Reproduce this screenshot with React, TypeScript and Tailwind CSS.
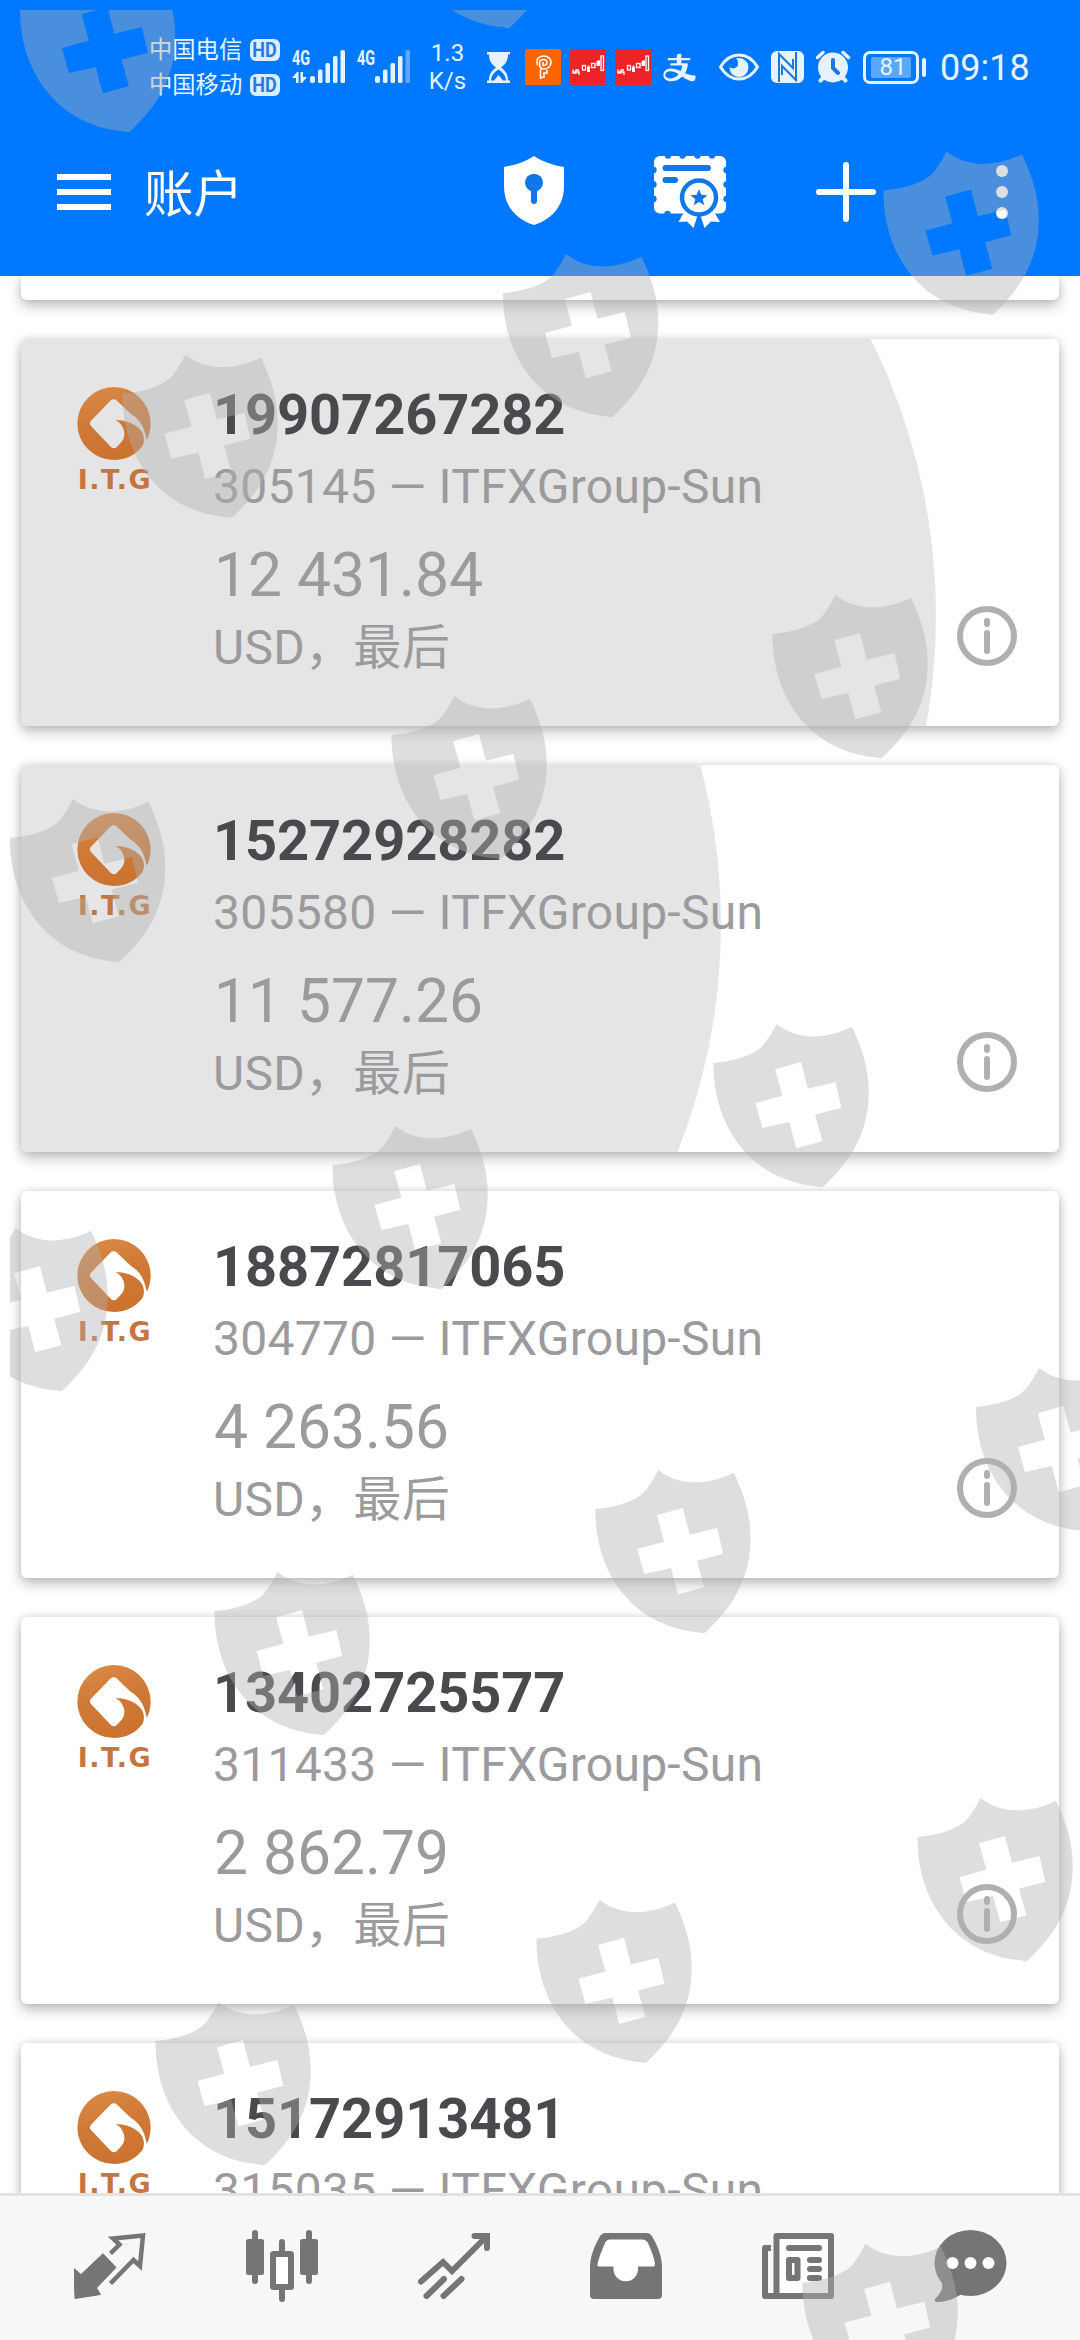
import type { ReactNode } from "react";
import { AiOutlineAlipay } from "react-icons/ai";

type Account = {
  name: string;
  login: string;
  balance?: string;
  // Centre of the ripple circle inside the card, if it is still expanding
  ripple?: { x: number; y: number };
};

const accounts: Account[] = [
  { name: "19907267282", login: "305145", balance: "12 431.84", ripple: { x: 294.5, y: 277 } },
  { name: "15272928282", login: "305580", balance: "11 577.26", ripple: { x: 79.5, y: 159 } },
  { name: "18872817065", login: "304770", balance: "4 263.56" },
  { name: "13402725577", login: "311433", balance: "2 862.79" },
  { name: "15172913481", login: "315035" },
];

const RIPPLE_RADIUS = 620;

const shields = [
  [19.5, -31],
  [399.5, -135],
  [883, 151.5],
  [502.5, 254],
  [122, 354.7],
  [772, 595],
  [391, 696],
  [9.5, 799],
  [713, 1024],
  [332, 1126],
  [-48, 1228],
  [975.5, 1368],
  [594.8, 1470],
  [214, 1572],
  [917, 1798],
  [536, 1899.7],
  [155, 2002],
  [802, 2243.7],
];

function ShieldOverlay() {
  return (
    <svg
      className="pointer-events-none absolute inset-0 z-50"
      width="1080"
      height="2340"
      viewBox="0 0 1080 2340"
    >
      <defs>
        <clipPath id="overlay-area">
          <rect x="10" y="10" width="1070" height="2330" />
        </clipPath>
        <path
          id="shield"
          fillRule="evenodd"
          d="M0.5 39C22 37 43 31 52 19Q58 11 63.5 0C82 15 110 17 139 2.7C151 28 157 50 155.5 75C154 110 137 138 111 162Q109 164 105 162.500C40 157 0 105 0.500 39ZM62.200 45.300L88 38L94.900 64.700L122.400 58L128.300 83.700L102.100 90.700L109.300 117.300L83.200 124.300L76.300 98L49.400 104L42.500 79L69.400 71.700Z"
        />
      </defs>
      <g clipPath="url(#overlay-area)" fill="#b0b0b0" fillOpacity="0.42">
        {shields.map(([x, y]) => (
          <use key={`${x}-${y}`} href="#shield" x={x} y={y} />
        ))}
      </g>
    </svg>
  );
}

function Carrier({ name }: { name: string }) {
  return (
    <div className="flex h-[35px] items-center justify-between">
      <span className="pt-[2px] text-[23.300px] leading-[33px] whitespace-nowrap">{name}</span>
      <span className="flex h-[22px] w-[30px] items-center justify-center rounded-[6px] bg-[#d9eeff] text-[20px] leading-none font-bold text-[#2a7be0]">
        <span className="scale-x-90">HD</span>
      </span>
    </div>
  );
}

function Signal({ dimLast, arrows }: { dimLast?: boolean; arrows?: boolean }) {
  return (
    <div className="relative h-[36px] w-[53px]">
      <span className="absolute -top-px left-0 origin-left scale-x-[0.72] text-[20px] leading-[20px] font-bold">4G</span>
      <svg className="absolute inset-0" width="53" height="36" viewBox="0 0 53 36" fill="currentColor">
        {arrows && (
          <path d="M0 29L5 23H6.500V34H4V29ZM8.500 23H11V28H15L10 34H8.500Z" />
        )}
        <rect x="18" y="27" width="5" height="7" rx="2" />
        <rect x="26" y="20.500" width="4.500" height="13.500" rx="1.500" />
        <rect x="33.500" y="14" width="4.500" height="20" rx="1.500" />
        <rect x="41" y="7" width="4.500" height="27" rx="1.500" />
        <rect x="48.500" y="1" width="4.500" height="33" rx="1.500" opacity={dimLast ? 0.4 : 1} />
      </svg>
    </div>
  );
}

function StockBadge() {
  return (
    <svg className="ml-[9px]" width="36" height="36" viewBox="0 0 36 36">
      <rect width="36" height="36" rx="2" fill="#ec2427" />
      <g fill="none" stroke="#fff" strokeWidth="1.300">
        <path d="M3 23H9V26M3 20.500V24H6V21H9" />
        <rect x="12.500" y="16.500" width="3" height="4.500" />
        <rect x="21.500" y="14.500" width="3.500" height="4" />
        <rect x="31" y="7" width="2.500" height="14.500" />
      </g>
      <path d="M17 18.500L18.500 16L20 18.500V23H17ZM26.500 12L30 11V17H26.500Z" fill="#fff" />
    </svg>
  );
}

function StatusBar() {
  return (
    <div className="flex h-[134px] items-center pl-[149px] text-[#e6f3ff]">
      <div className="w-[131px]">
        <Carrier name="中国电信" />
        <Carrier name="中国移动" />
      </div>
      <div className="ml-[12px]">
        <Signal arrows />
      </div>
      <div className="ml-[12px]">
        <Signal dimLast />
      </div>
      <div className="ml-[17px] w-[41px] text-center text-[24px] leading-[28px]">
        <div>1.3</div>
        <div>K/s</div>
      </div>
      <svg className="ml-[18px]" width="25" height="31" viewBox="0 0 25 31">
        <path d="M1 0H24V2.500H22C22 9 19.500 12 15 15.500C19.500 19 22 22 22 28.500H24V31H1V28.500H3C3 22 5.500 19 10 15.500C5.500 12 3 9 3 2.500H1Z" fill="currentColor" />
        <path d="M5 28.500C5.500 23 8.500 20 12.500 17.500C16.500 20 19.500 23 20 28.500H17L12.500 23L8 28.500Z" fill="#0078ff" />
      </svg>
      <svg className="ml-[14px]" width="36" height="36" viewBox="0 0 36 36" fill="none" stroke="#fff" strokeWidth="1.600">
        <rect width="36" height="36" rx="2" fill="#fd6500" stroke="none" />
        <path d="M12.500 16.500C10.500 10 14 7 18.500 7C23 7 26 10 26 13.500C26 17.500 22.500 20 18.500 20C15.500 20 14.500 18 14.500 14C14.500 11.500 16 10.500 18.500 10.500C21 10.500 22 12 22 13.500C22 15.500 20.500 16.500 18 16.500V13M15.500 20V29L19 28V24H22V21" />
      </svg>
      <StockBadge />
      <StockBadge />
      <AiOutlineAlipay className="ml-[10px] size-[37px]" />
      <svg className="ml-[20px]" width="42" height="28" viewBox="0 0 42 28">
        <path d="M2.500 14C12 -2 30 -2 39.500 14C30 30 12 30 2.500 14Z" fill="none" stroke="currentColor" strokeWidth="3" />
        <path d="M21 5A9.500 9.500 0 1 1 11.500 14C15 17 20.500 15 20 10C20 8 19 6 18 5.500Z" fill="currentColor" />
      </svg>
      <svg className="ml-[11px]" width="33" height="32" viewBox="0 0 33 32">
        <rect width="33" height="32" rx="6" fill="currentColor" />
        <path d="M8 31V3L22 17V8M25 1V29L11 15V24" fill="none" stroke="#1b78e0" strokeWidth="2" />
      </svg>
      <svg className="ml-[11px]" width="36" height="34" viewBox="0 0 36 34" fill="none" stroke="currentColor" strokeLinecap="round">
        <circle cx="18" cy="17.500" r="15" fill="currentColor" stroke="none" />
        <path d="M2.500 7.500L8 2.500M33.500 7.500L28 2.500" strokeWidth="3.500" />
        <path d="M5.500 30.500L8 28M30.500 30.500L28 28" strokeWidth="4" />
        <path d="M18 10V18L23 23" stroke="#1b78e0" strokeWidth="4" />
      </svg>
      <div className="ml-[12px] flex h-[33px] w-[56px] items-center justify-center rounded-[7px] border-[3px] border-[#e6f3ff]">
        <div className="flex h-[21px] w-[40px] items-center justify-center rounded-[2px] bg-[#5aa7ff] pl-1 text-[24px] leading-none">81</div>
      </div>
      <div className="ml-[3px] h-[19px] w-[4px] rounded-full bg-[#e6f3ff]" />
      <div className="ml-[14px] pt-[2px] text-[36px] leading-[40px]">09:18</div>
    </div>
  );
}

function ProtectIcon() {
  return (
    <svg width="60" height="69" viewBox="0 0 60 69">
      <path d="M30 0C38 5.500 48 9 60 11V30C60 49 49 63 30 69C11 63 0 49 0 30V11C12 9 22 5.500 30 0Z" fill="#fff" />
      <circle cx="30" cy="26.700" r="9" fill="#1277e6" />
      <path d="M30 30V45" stroke="#1277e6" strokeWidth="6" strokeLinecap="round" />
    </svg>
  );
}

function CertificateIcon() {
  return (
    <svg width="72" height="72" viewBox="0 0 72 72">
      <rect width="72" height="57.500" rx="6" fill="#fff" />
      <g fill="#0078ff">
        {[14, 28.500, 43.500, 58].map((x) => (
          <circle key={x} cx={x} cy="-0.500" r="3.200" />
        ))}
        {[14, 28.500, 43].map((y) => (
          <g key={y}>
            <circle cx="-0.500" cy={y} r="3.200" />
            <circle cx="72.500" cy={y} r="3.200" />
          </g>
        ))}
        <circle cx="13.500" cy="58" r="3.200" />
      </g>
      <path d="M11.500 12H54M11.500 24H21" stroke="#1277e6" strokeWidth="6" strokeLinecap="round" />
      <path d="M31 54L24.500 66L33 65.500L39.500 72L44 58H46L50.500 72L57 65.500L66 66L59 54Z" fill="#fff" />
      <circle cx="45" cy="41.500" r="17" fill="#fff" stroke="#1277e6" strokeWidth="4.500" />
      <path d="M45 33L47.300 38.800L53.500 39.200L48.700 43.200L50.300 49.300L45 46L39.700 49.300L41.300 43.200L36.500 39.200L42.700 38.800Z" fill="#1277e6" />
    </svg>
  );
}

function Toolbar() {
  return (
    <div className="flex h-[116px] items-center pl-[57px] text-white">
      <div className="flex w-[54px] flex-col gap-[9px]">
        <div className="h-[6px] bg-white" />
        <div className="h-[6px] bg-white" />
        <div className="h-[6px] bg-white" />
      </div>
      <h1 className="ml-[33px] w-[360px] pt-[6px] text-[49.500px] leading-[60px]">账户</h1>
      <div className="-mt-[3px]">
        <ProtectIcon />
      </div>
      <div className="ml-[90px]">
        <CertificateIcon />
      </div>
      <svg className="ml-[90px]" width="60" height="60" viewBox="0 0 60 60" stroke="#fff" strokeWidth="6" strokeLinecap="round">
        <path d="M30 3V57M3 30H57" />
      </svg>
      <div className="ml-[120px] flex flex-col gap-[9px]">
        <div className="size-[12px] rounded-full bg-white" />
        <div className="size-[12px] rounded-full bg-white" />
        <div className="size-[12px] rounded-full bg-white" />
      </div>
    </div>
  );
}

function BrokerLogo() {
  return (
    <div className="flex w-[74px] shrink-0 flex-col items-center pt-[48px]">
      <svg width="74" height="73" viewBox="0 0 220 219">
        <defs>
          <linearGradient id="copper" x1="0" y1="0" x2="0.300" y2="1">
            <stop offset="0" stopColor="#dd8b48" />
            <stop offset="0.500" stopColor="#d07a38" />
            <stop offset="1" stopColor="#cc7330" />
          </linearGradient>
        </defs>
        <path
          fillRule="evenodd"
          fill="url(#copper)"
          d="M110 0A110 109.500 0 1 0 110 219A110 109.500 0 0 0 196 176C204 158 200 134 180 120C166 108 142 99 114 99C130 106 142 124 141 142C141 150 138 158 133 164L119 179Q110 188 100 179L41 117Q34 109 41 101L99 41Q109 33 119 41L160 80C186 96 201 118 208 158C216 146 219 128 220 110A110 110 0 0 0 110 0Z"
        />
      </svg>
      <span className="mt-[6px] -mr-[2px] font-['DejaVu_Sans'] text-[27px] leading-[28px] font-bold tracking-[1.500px] text-[#c47640]">I.T.G</span>
    </div>
  );
}

function InfoIcon() {
  return (
    <svg width="60" height="60" viewBox="0 0 60 60" fill="none" stroke="#b0b0b0" strokeWidth="6" strokeLinecap="round">
      <circle cx="30" cy="30" r="27" />
      <path d="M30 15V18M30 27V45" />
    </svg>
  );
}

function AccountCard({ account }: { account: Account }) {
  const { name, login, balance, ripple } = account;
  return (
    <div className="h-[387px] shrink-0 rounded-[6px] bg-white shadow-[0_6px_14px_rgba(0,0,0,0.24),0_0_8px_rgba(0,0,0,0.12)]">
      <div className="relative flex h-full overflow-hidden rounded-[6px] pl-[56px]">
        {ripple && (
          <div
            className="absolute size-[1240px] rounded-full bg-[#e5e5e5]"
            style={{ left: ripple.x - RIPPLE_RADIUS, top: ripple.y - RIPPLE_RADIUS }}
          />
        )}
        <div className="relative flex flex-1">
          <BrokerLogo />
          <div className="ml-[62px] flex-1 pt-[42px] whitespace-pre text-[#9b9b9d]">
            <div className="text-[56px] leading-[68px] font-bold tracking-[-0.100px] text-[#4a4a4e]">{name}</div>
            <div className="mt-[8px] text-[48px] leading-[60px] tracking-[0.270px]">{login} — ITFXGroup-Sun</div>
            {balance && (
              <>
                <div className="mt-[23px] pl-px text-[60.500px] leading-[72px]">{balance}</div>
                <div className="mt-[6px] text-[48px] leading-[60px] tracking-[0.300px]">USD，最后</div>
              </>
            )}
          </div>
          <div className="flex w-[102px] items-end pb-[60px]">
            <InfoIcon />
          </div>
        </div>
      </div>
    </div>
  );
}

function Tab({ children }: { children: ReactNode }) {
  return <button className="flex items-center justify-center pb-[4px] text-[#757575]">{children}</button>;
}

function TabBar() {
  return (
    <nav className="grid h-[147px] shrink-0 grid-cols-6 border-t-[3px] border-[#e2e2e2] bg-[#f7f7f7] px-6">
      <Tab>
        <svg width="72" height="66" viewBox="0 0 72 66">
          <path d="M29 20.700L42 34.500L22.500 55L26.500 61.500L1 65.500L0 35.500L7 41.500Z" fill="currentColor" stroke="currentColor" strokeLinejoin="round" />
          <path d="M36.500 20.500L45.500 11.500L39 5.500L69 2.500L66 33L59.500 27L36.500 50.500" fill="none" stroke="currentColor" strokeWidth="4.500" />
        </svg>
      </Tab>
      <Tab>
        <svg width="72" height="72" viewBox="0 0 72 72" fill="currentColor">
          <rect y="9" width="18" height="36" rx="2.500" />
          <rect x="6" width="6" height="54" rx="3" />
          <rect x="54" y="9" width="18" height="36" rx="2.500" />
          <rect x="60" width="6" height="54" rx="3" />
          <rect x="33" y="9" width="6" height="63" rx="3" />
          <rect x="27" y="24" width="18" height="33" rx="0.500" fill="#fff" stroke="currentColor" strokeWidth="6" strokeLinejoin="round" />
        </svg>
      </Tab>
      <Tab>
        <svg width="72" height="66" viewBox="0 0 72 66" fill="none" stroke="currentColor" strokeWidth="6" strokeLinecap="round">
          <path d="M3 48.500L25 29L34 38L68 4" />
          <path d="M56.500 3H69V15" />
          <path d="M8.500 63L26 46M25.500 63L43.500 46" />
        </svg>
      </Tab>
      <Tab>
        <svg width="72" height="66" viewBox="0 0 72 66">
          <path d="M15 0H57Q60 0 62.500 4C67 12 72 23 72 34V62Q72 66 68 66H4Q0 66 0 62V34C0 23 5 12 9.500 4Q12 0 15 0Z" fill="currentColor" />
          <path d="M20 6.500H52Q56 6.500 58 10C61 17 64 24 65 31Q65 33.500 63 33.500H48V36A12 12 0 0 1 23.500 36V33.500H9Q7 33.500 7.500 31C9 24 12 17 15 10Q16.500 6.500 20 6.500Z" fill="#fff" />
        </svg>
      </Tab>
      <Tab>
        <svg width="72" height="66" viewBox="0 0 72 66" fill="none" stroke="currentColor" strokeWidth="6">
          <path d="M9 15H3V63H15" strokeLinejoin="round" />
          <rect x="14.500" y="3" width="54.500" height="60" fill="#fcfcfc" strokeLinejoin="round" />
          <path d="M27 15H57M48 27H57M48 36H57M48 45H57" strokeLinecap="round" />
          <rect x="27" y="27" width="8.500" height="18" strokeLinejoin="round" />
        </svg>
      </Tab>
      <Tab>
        <svg width="73" height="72" viewBox="0 0 73 72" fill="currentColor">
          <ellipse cx="36.500" cy="33" rx="36" ry="33" />
          <path d="M6 48C11 57 7 63 1 69Q0 72 3 72C12 72 20 69 27 64.500Z" />
          <g fill="#fff">
            <circle cx="18.500" cy="33" r="6" />
            <circle cx="36.500" cy="33" r="6" />
            <circle cx="54.500" cy="33" r="6" />
          </g>
        </svg>
      </Tab>
    </nav>
  );
}

export default function App() {
  return (
    <div className="relative flex h-[2340px] w-[1080px] flex-col overflow-hidden bg-white font-['Roboto','Noto_Sans_CJK_SC',sans-serif]">
      <header className="h-[276px] shrink-0 bg-[#0078ff]">
        <StatusBar />
        <Toolbar />
      </header>

      <main className="flex min-h-0 flex-1 flex-col gap-[39px] overflow-hidden px-[21px]">
        {/* Bottom edge of the card scrolled under the header */}
        <div className="h-[24px] shrink-0 rounded-b-[6px] bg-white shadow-[0_6px_14px_rgba(0,0,0,0.24),0_0_8px_rgba(0,0,0,0.12)]" />
        {accounts.map((account) => (
          <AccountCard key={account.login} account={account} />
        ))}
      </main>

      <TabBar />
      <ShieldOverlay />
    </div>
  );
}
